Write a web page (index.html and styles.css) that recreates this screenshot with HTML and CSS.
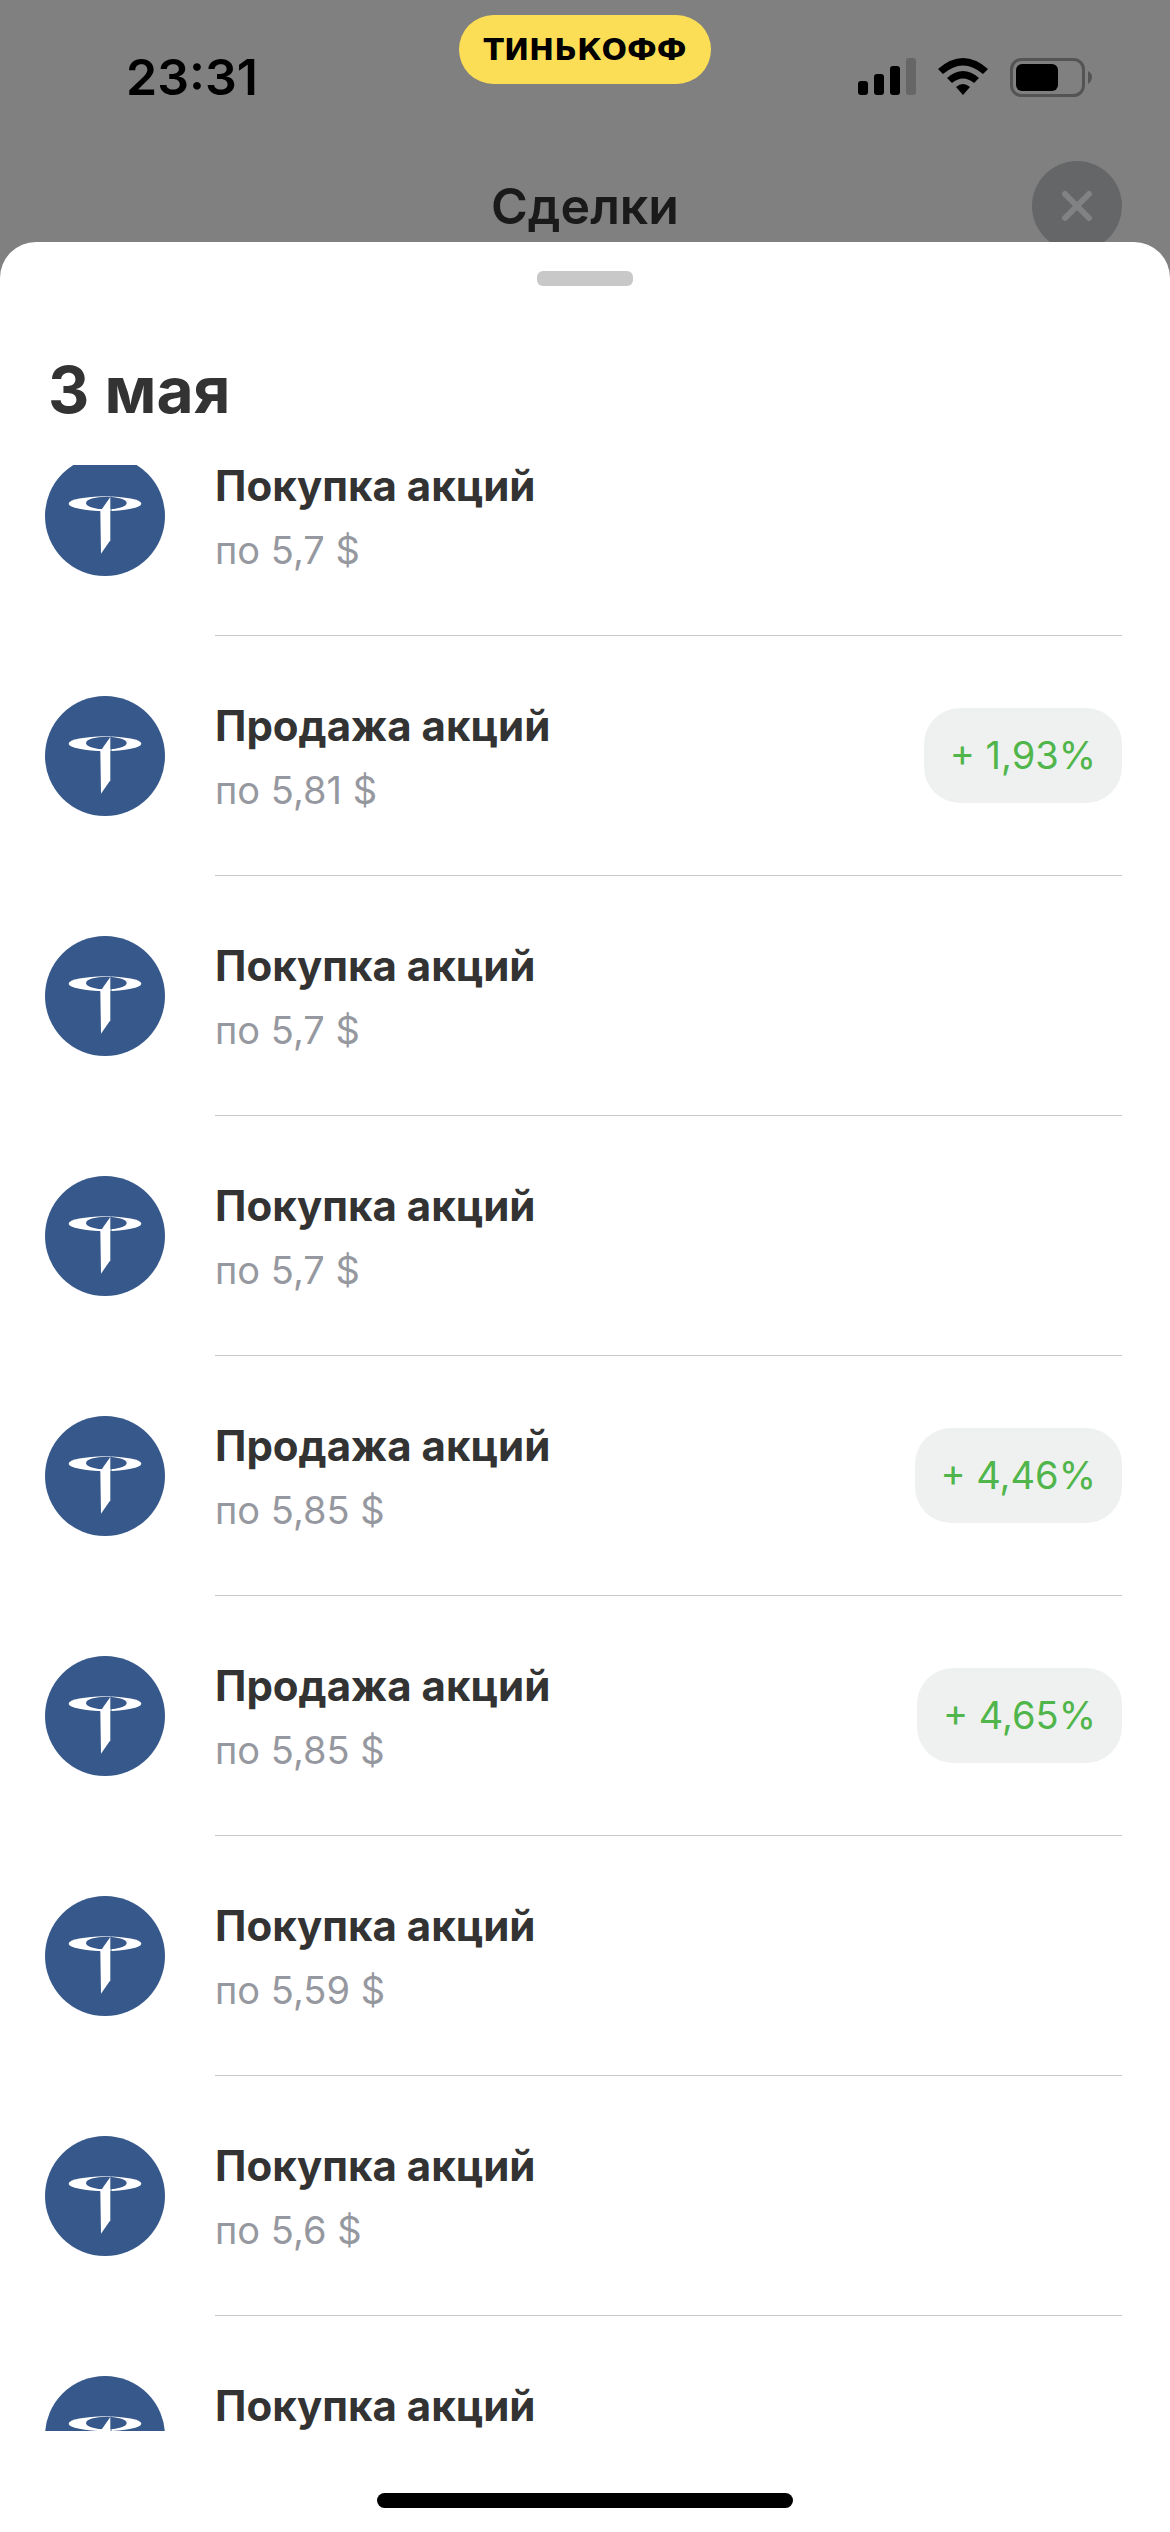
FILE: index.html
```html
<!DOCTYPE html>
<html lang="ru">
<head>
    <meta charset="UTF-8">
    <meta name="viewport" content="width=device-width, initial-scale=1.0">
    <title>Сделки</title>
    <link rel="stylesheet" href="styles.css">
</head>
<body>

<svg class="sprite" aria-hidden="true">
    <symbol id="logo" viewBox="0 0 360 360">
        <circle cx="180" cy="180" r="180" fill="#36588a"/>
        <ellipse cx="180" cy="143" rx="109" ry="22" fill="#fff"/>
        <ellipse cx="184" cy="141" rx="61" ry="19" fill="#36588a"/>
        <path d="M198 121V168" stroke="#36588a" stroke-width="3"/>
        <path d="M196 123V253L168 293L166 166Z" fill="#fff"/>
    </symbol>
</svg>

<div class="status-bar">
    <div class="time">23:31</div>
    <div class="brand">ТИНЬКОФФ</div>
    <div class="indicators">
        <svg width="58" height="38" viewBox="0 0 58 38">
            <rect x="0" y="23" width="10" height="14" rx="3"/>
            <rect x="16" y="16" width="10" height="21" rx="3"/>
            <rect x="32" y="8" width="10" height="29" rx="3"/>
            <rect x="48" y="0" width="10" height="37" rx="3" fill="#666"/>
        </svg>
        <svg width="50" height="38" viewBox="0 0 50 38">
            <path d="M0 11Q25 -11 50 11L45 16Q25 -1 5 16Z"/>
            <path d="M9 20Q25 6 41 20L36 25Q25 16 14 25Z"/>
            <path d="M18 29Q25 23 32 29L25 37Z"/>
        </svg>
        <svg width="82" height="39" viewBox="0 0 82 39">
            <rect x="1.5" y="1.5" width="72" height="36" rx="10" fill="none" stroke="#545454" stroke-width="3"/>
            <rect x="6" y="6" width="42" height="27" rx="6"/>
            <path d="M78 13Q82 15 82 19Q82 23 78 26Z" fill="#545454"/>
        </svg>
    </div>
</div>

<header class="header">
    <h1>Сделки</h1>
    <button class="close" type="button" aria-label="Закрыть">
        <svg width="32" height="32" viewBox="0 0 32 32"><path d="M4 4L28 28M28 4L4 28"/></svg>
    </button>
</header>

<main class="sheet">
    <div class="handle"></div>
    <h2>3 мая</h2>
    <div class="scroll">
        <ul class="deals">
            <li class="deal">
                <svg class="avatar"><use href="#logo"/></svg>
                <div class="info">
                    <div class="text">
                        <h3>Покупка акций</h3>
                        <p>по 5,7 $</p>
                    </div>
                </div>
            </li>
            <li class="deal">
                <svg class="avatar"><use href="#logo"/></svg>
                <div class="info">
                    <div class="text">
                        <h3>Продажа акций</h3>
                        <p>по 5,81 $</p>
                    </div>
                    <span class="profit">+ 1,93%</span>
                </div>
            </li>
            <li class="deal">
                <svg class="avatar"><use href="#logo"/></svg>
                <div class="info">
                    <div class="text">
                        <h3>Покупка акций</h3>
                        <p>по 5,7 $</p>
                    </div>
                </div>
            </li>
            <li class="deal">
                <svg class="avatar"><use href="#logo"/></svg>
                <div class="info">
                    <div class="text">
                        <h3>Покупка акций</h3>
                        <p>по 5,7 $</p>
                    </div>
                </div>
            </li>
            <li class="deal">
                <svg class="avatar"><use href="#logo"/></svg>
                <div class="info">
                    <div class="text">
                        <h3>Продажа акций</h3>
                        <p>по 5,85 $</p>
                    </div>
                    <span class="profit">+ 4,46%</span>
                </div>
            </li>
            <li class="deal">
                <svg class="avatar"><use href="#logo"/></svg>
                <div class="info">
                    <div class="text">
                        <h3>Продажа акций</h3>
                        <p>по 5,85 $</p>
                    </div>
                    <span class="profit">+ 4,65%</span>
                </div>
            </li>
            <li class="deal">
                <svg class="avatar"><use href="#logo"/></svg>
                <div class="info">
                    <div class="text">
                        <h3>Покупка акций</h3>
                        <p>по 5,59 $</p>
                    </div>
                </div>
            </li>
            <li class="deal">
                <svg class="avatar"><use href="#logo"/></svg>
                <div class="info">
                    <div class="text">
                        <h3>Покупка акций</h3>
                        <p>по 5,6 $</p>
                    </div>
                </div>
            </li>
            <li class="deal">
                <svg class="avatar"><use href="#logo"/></svg>
                <div class="info">
                    <div class="text">
                        <h3>Покупка акций</h3>
                    </div>
                </div>
            </li>
        </ul>
    </div>
    <div class="home-bar"></div>
</main>

</body>
</html>
```
FILE: styles.css
```css
* {
    box-sizing: border-box;
    margin: 0;
    padding: 0;
}
body {
    display: flex;
    flex-direction: column;
    height: 100vh;
    overflow: hidden;
    background-color: #808080;
    color: #333;
    font-family: Inter, "Liberation Sans", sans-serif;
}
.sprite {
    display: none;
}

/* status bar */
.status-bar {
    display: grid;
    grid-template-columns: 1fr auto 1fr;
    align-items: start;
    padding: 15px 78px 0;
    height: 160px;
    color: #000;
}
.time {
    padding: 32px 0 0 48px;
    font-size: 50px;
    line-height: 60px;
    font-weight: 600;
}
.brand {
    padding: 0 24px;
    border-radius: 36px;
    background-color: #fbde56;
    font-family: "DejaVu Sans", sans-serif;
    font-size: 30px;
    line-height: 69px;
    font-weight: 700;
}
.indicators {
    display: flex;
    justify-content: flex-end;
    gap: 22px;
    padding-top: 43px;
}

/* dimmed screen header */
.header {
    display: grid;
    grid-template-columns: 1fr auto 1fr;
    align-items: center;
    padding: 0 48px;
    height: 92px;
    color: #1a1a1a;
}
.header h1 {
    grid-column: 2;
    font-size: 50px;
    line-height: 60px;
    font-weight: 600;
}
.close {
    display: flex;
    align-items: center;
    justify-content: center;
    justify-self: end;
    width: 90px;
    height: 90px;
    border: none;
    border-radius: 50%;
    background-color: #646667;
    cursor: pointer;
}
.close path {
    fill: none;
    stroke: #808283;
    stroke-width: 6;
    stroke-linecap: round;
}

/* bottom sheet */
.sheet {
    display: flex;
    flex-direction: column;
    flex: 1;
    min-height: 0;
    margin-top: -10px;
    padding: 29px 0 24px;
    border-radius: 36px 36px 0 0;
    background-color: #fff;
    z-index: 1;
}
.handle {
    align-self: center;
    width: 96px;
    height: 15px;
    border-radius: 6px;
    background-color: #c8c8c8;
}
.sheet h2 {
    padding: 64px 48px 35px;
    font-size: 64px;
    line-height: 80px;
    font-weight: 700;
}
.scroll {
    flex: 1;
    min-height: 0;
    overflow: hidden;
}
/* list is scrolled a little, first row goes under the heading */
.deals {
    margin-top: -69px;
    list-style: none;
}
.deal {
    display: flex;
    align-items: center;
    gap: 50px;
    height: 240px;
    padding: 0 48px 0 45px;
}
.avatar {
    flex: none;
    width: 120px;
    height: 120px;
}
.info {
    display: flex;
    align-items: center;
    justify-content: space-between;
    flex: 1;
    height: 100%;
    border-bottom: 1px solid #c8c8cc;
}
.text {
    height: 120px;
    padding-top: 10px;
}
.text h3 {
    font-size: 42px;
    line-height: 40px;
    font-weight: 700;
}
.text p {
    margin-top: 16px;
    color: #96989f;
    font-size: 38px;
    line-height: 56px;
}
.profit {
    padding: 0 26px;
    border-radius: 36px;
    background-color: #eff1f1;
    color: #50b54a;
    font-size: 38px;
    line-height: 95px;
}
.home-bar {
    align-self: center;
    width: 416px;
    height: 15px;
    margin-top: 62px;
    border-radius: 8px;
    background-color: #000;
}
```
